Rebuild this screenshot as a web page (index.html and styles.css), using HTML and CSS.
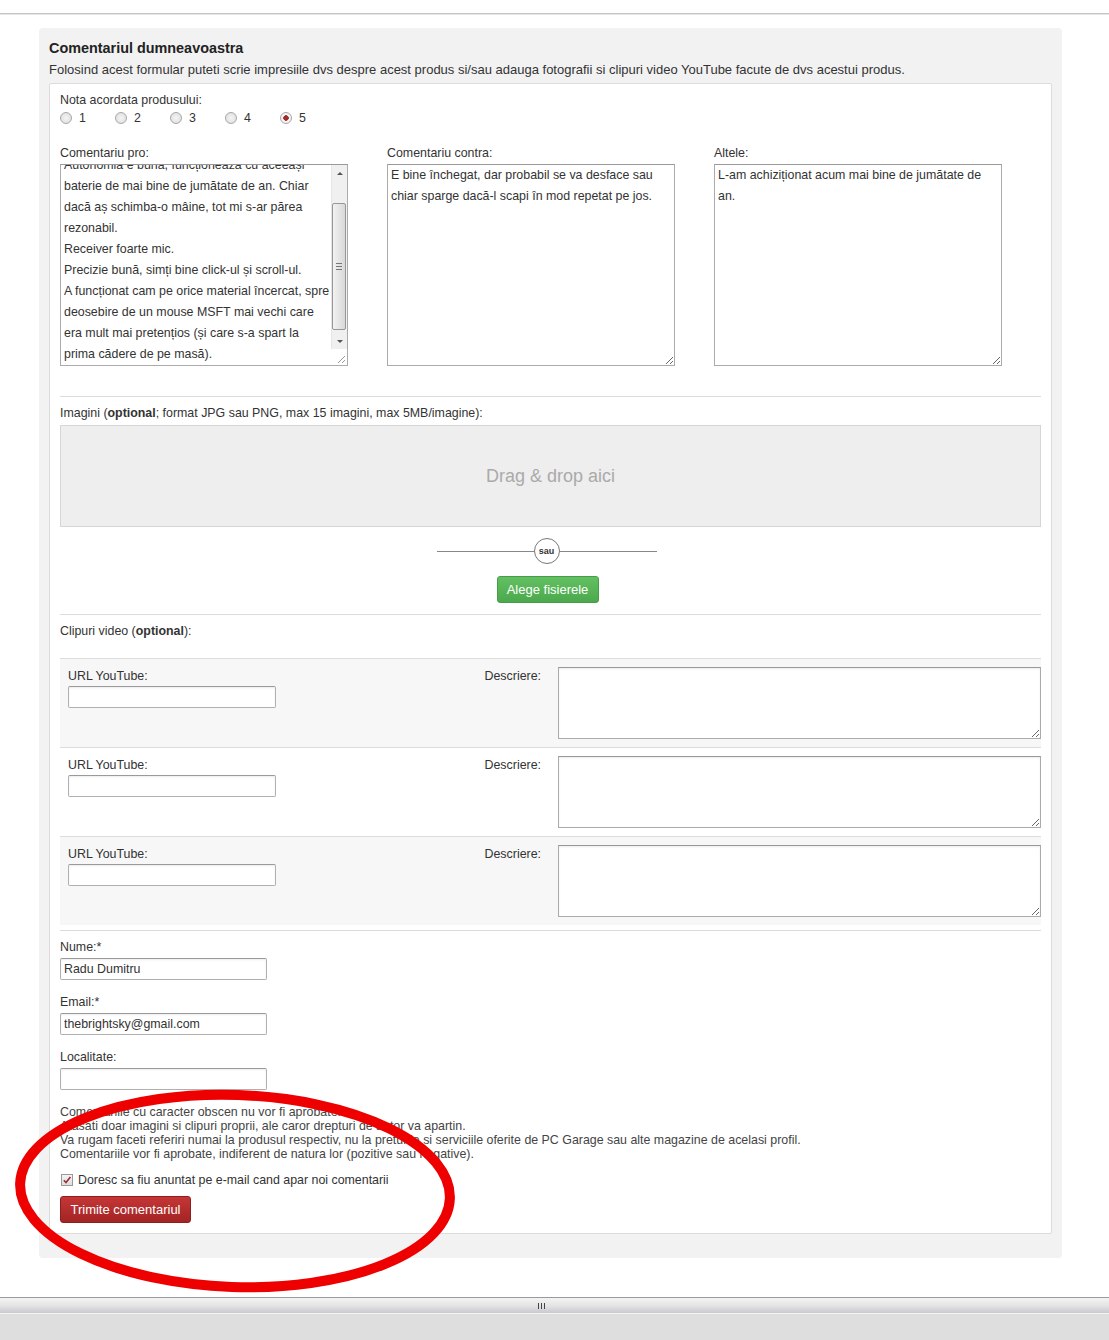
FILE: index.html
```html
<!DOCTYPE html>
<html>
    <head>
        <meta charset="utf-8">
        <link rel="stylesheet" href="styles.css">
    </head>
    <body>
        <div class="top-strip"></div>
        <div class="page">
            <div class="review-panel">
                <h3 class="panel-title">Comentariul dumneavoastra</h3>
                <p class="panel-intro">Folosind acest formular puteti scrie impresiile dvs despre acest produs si/sau adauga fotografii si clipuri video YouTube facute de dvs acestui produs.</p>
                <form class="review-form">
                    <div class="field-label">Nota acordata produsului:</div>
                    <div class="rating">
                        <label class="rating-opt"><input type="radio" name="nota" class="radio"> 1</label>
                        <label class="rating-opt"><input type="radio" name="nota" class="radio"> 2</label>
                        <label class="rating-opt"><input type="radio" name="nota" class="radio"> 3</label>
                        <label class="rating-opt"><input type="radio" name="nota" class="radio"> 4</label>
                        <label class="rating-opt"><input type="radio" name="nota" class="radio" checked> 5</label>
                    </div>

                    <div class="opinions">
                        <div class="opinion">
                            <div class="field-label">Comentariu pro:</div>
                            <div class="pro-box">
                                <textarea class="pro-text" id="proText">Autonomia e bună, funcționează cu aceeași baterie de mai bine de jumătate de an. Chiar dacă aș schimba-o mâine, tot mi s-ar părea rezonabil.
Receiver foarte mic.
Precizie bună, simți bine click-ul și scroll-ul.
A funcționat cam pe orice material încercat, spre deosebire de un mouse MSFT mai vechi care era mult mai pretențios (și care s-a spart la prima cădere de pe masă).</textarea>
                                <div class="fake-scroll">
                                    <span class="scroll-btn"><i class="arrow-up"></i></span>
                                    <span class="scroll-track">
                                        <span class="scroll-thumb"><i></i><i></i><i></i></span>
                                    </span>
                                    <span class="scroll-btn"><i class="arrow-down"></i></span>
                                    <span class="resize-corner">
                                        <svg width="16" height="16" viewBox="0 0 16 16">
                                            <path d="M14 7 L7 14 M14 11 L11 14" stroke="#999" stroke-width="1"/>
                                        </svg>
                                    </span>
                                </div>
                            </div>
                        </div>
                        <div class="opinion">
                            <div class="field-label">Comentariu contra:</div>
                            <textarea class="opinion-text">E bine închegat, dar probabil se va desface sau chiar sparge dacă-l scapi în mod repetat pe jos.</textarea>
                        </div>
                        <div class="opinion">
                            <div class="field-label">Altele:</div>
                            <textarea class="opinion-text">L-am achiziționat acum mai bine de jumătate de an.</textarea>
                        </div>
                    </div>

                    <hr class="sep sep-images">
                    <div class="field-label">Imagini (<b>optional</b>; format JPG sau PNG, max 15 imagini, max 5MB/imagine):</div>
                    <div class="dropzone">Drag &amp; drop aici</div>
                    <div class="or-row">
                        <span class="or-line"></span>
                        <span class="or-circle">sau</span>
                        <span class="or-line"></span>
                    </div>
                    <div class="pick-row">
                        <button type="button" class="btn btn-green">Alege fisierele</button>
                    </div>

                    <hr class="sep sep-videos">
                    <div class="field-label">Clipuri video (<b>optional</b>):</div>
                    <div class="videos">
                        <div class="video-row">
                            <div class="video-url">
                                <div class="field-label">URL YouTube:</div>
                                <input type="text" class="text-input">
                            </div>
                            <div class="video-desc-label">Descriere:</div>
                            <textarea class="video-desc"></textarea>
                        </div>
                        <div class="video-row">
                            <div class="video-url">
                                <div class="field-label">URL YouTube:</div>
                                <input type="text" class="text-input">
                            </div>
                            <div class="video-desc-label">Descriere:</div>
                            <textarea class="video-desc"></textarea>
                        </div>
                        <div class="video-row">
                            <div class="video-url">
                                <div class="field-label">URL YouTube:</div>
                                <input type="text" class="text-input">
                            </div>
                            <div class="video-desc-label">Descriere:</div>
                            <textarea class="video-desc"></textarea>
                        </div>
                    </div>

                    <hr class="sep sep-contact">
                    <div class="contact-field">
                        <div class="field-label">Nume:*</div>
                        <input type="text" class="text-input" value="Radu Dumitru">
                    </div>
                    <div class="contact-field">
                        <div class="field-label">Email:*</div>
                        <input type="text" class="text-input" value="thebrightsky@gmail.com">
                    </div>
                    <div class="contact-field">
                        <div class="field-label">Localitate:</div>
                        <input type="text" class="text-input">
                    </div>

                    <div class="notes">
                        Comentariile cu caracter obscen nu vor fi aprobate.<br>
                        Atasati doar imagini si clipuri proprii, ale caror drepturi de autor va apartin.<br>
                        Va rugam faceti referiri numai la produsul respectiv, nu la preturile si serviciile oferite de PC Garage sau alte magazine de acelasi profil.<br>
                        Comentariile vor fi aprobate, indiferent de natura lor (pozitive sau negative).
                    </div>

                    <label class="notify">
                        <span class="check-box">
                            <svg width="10" height="10" viewBox="0 0 10 10"><path d="M1.8 5.2 L4 7.6 L8.4 2" fill="none" stroke="#9b2b35" stroke-width="1.6"/></svg>
                        </span>
                        Doresc sa fiu anuntat pe e-mail cand apar noi comentarii
                    </label>

                    <button type="button" class="btn btn-red">Trimite comentariul</button>
                </form>
            </div>
        </div>
        <div class="hscroll">
            <span class="grip"><i></i><i></i><i></i></span>
        </div>
        <div class="bottom-gray"></div>

        <!-- hand drawn marker over the bottom of the form -->
        <svg class="annotation" width="1109" height="1340" viewBox="0 0 1109 1340">
            <ellipse cx="235" cy="1191" rx="215" ry="96" fill="none" stroke="#ee0000" stroke-width="10" transform="rotate(2 235 1191)"/>
        </svg>
        <script src="script.js"></script>
    </body>
</html>
```

FILE: styles.css
```css
* {
    box-sizing: border-box;
}

body {
    margin: 0;
    height: 1340px;
    display: flex;
    flex-direction: column;
    overflow: hidden;
    position: relative;
    background: #fff;
    font-family: "Liberation Sans", Arial, sans-serif;
    font-size: 12.4px;
    color: #333;
}

.top-strip {
    height: 14px;
    flex: none;
    border-bottom: 1px solid #c4c4c4;
    box-shadow: 0 1px 0 #e6e6e6;
}

.page {
    flex: 1;
    padding: 14px 0 0 39px;
}

.review-panel {
    width: 1023px;
    background: #f2f2f2;
    border-radius: 4px;
    padding: 12px 10px 24px;
}

.panel-title {
    margin: 0;
    font-size: 14.4px;
    line-height: 16px;
    font-weight: bold;
    color: #222;
}

.panel-intro {
    margin: 6px 0 0;
    font-size: 13px;
    line-height: 16px;
    color: #333;
}

.review-form {
    margin-top: 5px;
    background: #fff;
    border: 1px solid #dcdcdc;
    border-radius: 2px;
    padding: 9px 10px 10px;
}

.field-label {
    line-height: 14px;
    color: #333;
}

.rating {
    display: flex;
    margin-top: 4px;
    height: 14px;
}

.rating-opt {
    width: 55px;
    display: flex;
    align-items: center;
    gap: 7px;
    line-height: 14px;
}

.radio {
    appearance: none;
    width: 12px;
    height: 12px;
    margin: 0;
    border: 1px solid #a8a8a8;
    border-radius: 50%;
    background: radial-gradient(circle, #f4f4f4 0, #dcdcdc 100%);
}

.radio:checked {
    background: radial-gradient(circle, #a02c2c 0, #a02c2c 2.5px, #fafafa 3px, #e4e4e4 100%);
}

.opinions {
    display: flex;
    gap: 39px;
    margin-top: 21px;
}

.opinion {
    width: 288px;
}

.opinion-text {
    display: block;
    width: 288px;
    height: 202px;
    margin: 4px 0 0;
    padding: 0 3px 2px;
    border: 1px solid #ababab;
    border-top-color: #999;
    font-family: "Liberation Sans", Arial, sans-serif;
    font-size: 12.4px;
    line-height: 21px;
    color: #333;
    outline: none;
    overflow: auto;
}

/* textarea with its own drawn scrollbar (headless hides native ones) */
.pro-box {
    display: flex;
    width: 288px;
    height: 202px;
    margin-top: 4px;
    border: 1px solid #ababab;
    border-top-color: #999;
    background: #fff;
}

.pro-text {
    flex: 1;
    height: 100%;
    margin: 0;
    padding: 0 0 0 3px;
    border: 0;
    font-family: "Liberation Sans", Arial, sans-serif;
    font-size: 12.4px;
    line-height: 21px;
    color: #333;
    outline: none;
    resize: none;
    overflow: hidden;
}

.fake-scroll {
    width: 16px;
    flex: none;
    display: flex;
    flex-direction: column;
    background: #f0f0f0;
    border-left: 1px solid #e6e6e6;
}

.scroll-btn {
    height: 16px;
    display: flex;
    align-items: center;
    justify-content: center;
}

.arrow-up {
    border-left: 3.5px solid transparent;
    border-right: 3.5px solid transparent;
    border-bottom: 3px solid #555;
}

.arrow-down {
    border-left: 3.5px solid transparent;
    border-right: 3.5px solid transparent;
    border-top: 3px solid #555;
}

.scroll-track {
    flex: 1;
    padding: 22px 1px 3px 0;
}

.scroll-thumb {
    display: flex;
    flex-direction: column;
    align-items: center;
    justify-content: center;
    gap: 2px;
    height: 127px;
    border: 1px solid #979797;
    border-radius: 2px;
    background: linear-gradient(to right, #f2f2f2, #d8d8d8);
}

.scroll-thumb i {
    width: 6px;
    height: 1px;
    background: #777;
}

.resize-corner {
    height: 16px;
    background: #fff;
    margin-left: -1px;
}

.sep {
    border: 0;
    border-top: 1px solid #dcdcdc;
    margin: 0;
}

.sep-images {
    margin: 30px 0 9px;
}

.sep-videos {
    margin: 11px 0 9px;
}

.sep-contact {
    margin: 5px 0 9px;
}

.dropzone {
    margin-top: 5px;
    height: 102px;
    background: #eeeeee;
    border: 1px solid #d6d6d6;
    display: flex;
    align-items: center;
    justify-content: center;
    font-size: 18px;
    color: #aaa;
}

.or-row {
    margin-top: 11px;
    display: flex;
    align-items: center;
    justify-content: center;
    padding-right: 8px;
}

.or-line {
    width: 97px;
    border-top: 1px solid #888;
}

.or-circle {
    width: 26px;
    height: 26px;
    border: 1px solid #777;
    border-radius: 50%;
    display: flex;
    align-items: center;
    justify-content: center;
    font-size: 9px;
    font-weight: bold;
    color: #333;
    background: #fff;
}

.pick-row {
    margin-top: 12px;
    display: flex;
    justify-content: center;
    padding-right: 6px;
}

.btn {
    height: 27px;
    border-radius: 3px;
    font-family: "Liberation Sans", Arial, sans-serif;
    font-size: 13px;
    color: #fff;
    padding: 0;
    white-space: nowrap;
    cursor: pointer;
}

.btn-green {
    width: 102px;
    background: linear-gradient(#62c062, #4ca84c);
    border: 1px solid #479c47;
}

.videos {
    margin-top: 20px;
}

.video-row {
    display: grid;
    grid-template-columns: 400px 1fr 483px;
    padding: 8px 0 8px 8px;
    border-top: 1px solid #dcdcdc;
    height: 89px;
}

.video-row:nth-child(odd) {
    background: #f7f7f7;
}

.video-url .field-label,
.video-desc-label {
    margin-top: 2px;
}

.video-url .text-input {
    margin-top: 3px;
}

.video-desc-label {
    line-height: 14px;
    text-align: right;
    padding-right: 17px;
}

.video-desc {
    width: 483px;
    height: 72px;
    margin: 0;
    border: 1px solid #ababab;
    border-top-color: #999;
    box-shadow: inset 0 1px 2px rgba(0, 0, 0, 0.08);
    outline: none;
    resize: vertical;
}

.text-input {
    display: block;
    width: 208px;
    height: 22px;
    margin: 0;
    border: 1px solid #b0b0b0;
    border-top-color: #9a9a9a;
    border-radius: 2px;
    box-shadow: inset 0 1px 2px rgba(0, 0, 0, 0.08);
    padding: 0 3px;
    font-family: "Liberation Sans", Arial, sans-serif;
    font-size: 12.4px;
    color: #333;
    outline: none;
}

.contact-field + .contact-field {
    margin-top: 15px;
}

.contact-field .text-input {
    width: 207px;
    margin-top: 4px;
}

.notes {
    margin-top: 15px;
    line-height: 14px;
    color: #444;
}

.notify {
    margin-top: 12px;
    display: flex;
    align-items: center;
    gap: 5px;
    height: 14px;
    padding-left: 1px;
}

.check-box {
    width: 12px;
    height: 12px;
    border: 1px solid #9a9a9a;
    background: linear-gradient(#f4f4f4, #dedede);
    display: flex;
    align-items: center;
    justify-content: center;
}

.btn-red {
    display: block;
    margin-top: 9px;
    width: 131px;
    background: linear-gradient(#c53636, #a32424);
    border: 1px solid #8f1f1f;
}

.hscroll {
    flex: none;
    height: 17px;
    border-top: 1px solid #9a9a9a;
    background: linear-gradient(#f4f4f4, #e4e4e4 50%, #c9c9cf);
    display: flex;
    align-items: center;
    justify-content: center;
    padding-right: 27px;
    border-bottom: 1px solid #f4f4f4;
}

.grip {
    display: flex;
    gap: 2px;
}

.grip i {
    width: 1px;
    height: 6px;
    background: #444;
}

.bottom-gray {
    flex: none;
    height: 26px;
    background: #dedede;
}

.annotation {
    position: absolute;
    top: 0;
    left: 0;
    pointer-events: none;
}
```

FILE: script.js
```js
let pro = document.getElementById("proText");
pro.scrollTop = pro.scrollHeight;
```
